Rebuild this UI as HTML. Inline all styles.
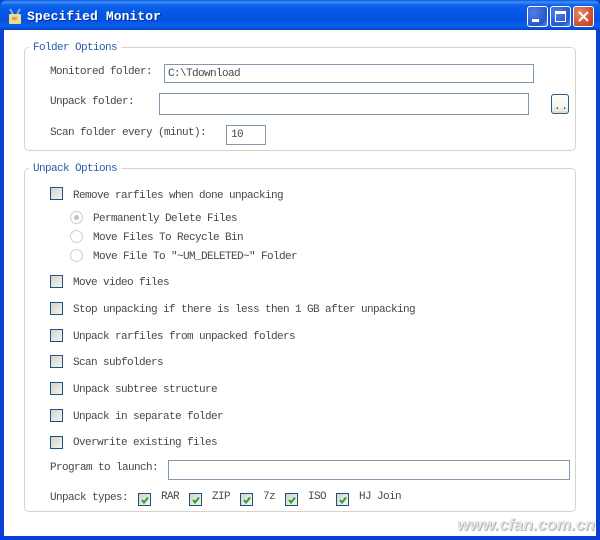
<!DOCTYPE html>
<html><head><meta charset="utf-8"><style>
html,body{margin:0;padding:0;background:#fff}
#w{position:relative;width:600px;height:540px;overflow:hidden;background:#0a3fd8}
#c{position:absolute;left:4px;top:30px;width:592px;height:506px;background:#fff}
.tb{position:absolute;left:0;top:0;width:600px;height:30px;border-radius:7px 7px 0 0;background:linear-gradient(180deg,#0a56d8 0,#3c8efb 2px,#0f62e8 5px,#0558e6 12px,#0552df 20px,#0a60ef 26px,#0445c4 30px)}
.t{position:absolute;font:11px/14px "Liberation Mono",monospace;letter-spacing:-.6px;color:#484848;white-space:pre}
.title{position:absolute;left:27px;top:9px;font:bold 13px/15px "Liberation Mono",monospace;letter-spacing:.08px;color:#fff;text-shadow:1px 1px 0 #0a2f90;white-space:pre}
.g{position:absolute;border:1px solid #d6d4c8;border-radius:5px;box-sizing:border-box}
.lg{position:absolute;background:#fff;padding:0 4px 0 4px;font:11px/14px "Liberation Mono",monospace;letter-spacing:-.6px;color:#2a5cb0}
.i{position:absolute;box-sizing:border-box;border:1px solid #8299ad;background:#fff}
.cb{position:absolute;box-sizing:border-box;width:13px;height:13px;border:1px solid #1c5180;background:linear-gradient(135deg,#d4d4ce,#f4f4f0)}
.r{position:absolute;box-sizing:border-box;width:13px;height:13px;border-radius:50%;border:1px solid #cfcfc8;background:#fff}
.btn{position:absolute;box-sizing:border-box;border:1px solid #fff;border-radius:3px}
svg{position:absolute;overflow:visible}
</style></head><body><div id="w">
<div class="tb"></div>
<div id="c"></div>
<svg style="left:8px;top:8px" width="14" height="16" viewBox="0 0 14 16"><path d="M2 1L5 6M12 1L9 6" stroke="#7fb0e8" stroke-width="2" fill="none"/><rect x="1" y="6" width="12" height="10" rx="1" fill="#f0dc8c"/><rect x="4" y="9" width="5" height="3" fill="#e0a060"/></svg>
<div class="title">Specified Monitor</div>
<div class="btn" style="left:527px;top:6px;width:21px;height:21px;background:radial-gradient(circle at 30% 30%,#4f7fe8,#2a55cc 70%,#6d8fe0)"><div style="position:absolute;left:4px;top:12px;width:7px;height:3px;background:#fff"></div></div>
<div class="btn" style="left:550px;top:6px;width:21px;height:21px;background:radial-gradient(circle at 30% 30%,#4f7fe8,#2a55cc 70%,#6d8fe0)"><div style="position:absolute;left:4px;top:4px;width:11px;height:11px;box-sizing:border-box;border:1px solid #fff;border-top-width:3px"></div></div>
<div class="btn" style="left:573px;top:6px;width:21px;height:21px;background:radial-gradient(circle at 30% 30%,#e88a6a,#d0492a 70%,#c03a1c)"><svg style="left:4px;top:4px" width="11" height="11" viewBox="0 0 11 11"><path d="M1 1L10 10M10 1L1 10" stroke="#fff" stroke-width="2"/></svg></div>

<div class="g" style="left:24px;top:47px;width:552px;height:104px"></div>
<div class="lg" style="left:29px;top:41px">Folder Options</div>
<div class="t" style="left:50px;top:65px">Monitored folder:</div>
<div class="i" style="left:164px;top:64px;width:370px;height:19px"></div>
<div class="t" style="left:168px;top:67px">C:\Tdownload</div>
<div class="t" style="left:50px;top:95px">Unpack folder:</div>
<div class="i" style="left:159px;top:93px;width:370px;height:22px"></div>
<div style="position:absolute;left:551px;top:94px;width:18px;height:20px;box-sizing:border-box;border:1px solid #2c5a80;border-radius:3px;background:linear-gradient(180deg,#fff,#f0f0ea 80%,#dcdcd4)"></div>
<div class="t" style="left:554px;top:100px;letter-spacing:.6px">..</div>
<div class="t" style="left:50px;top:126px">Scan folder every (minut):</div>
<div class="i" style="left:226px;top:125px;width:40px;height:20px"></div>
<div class="t" style="left:231px;top:128px">10</div>

<div class="g" style="left:24px;top:168px;width:552px;height:344px"></div>
<div class="lg" style="left:29px;top:162px">Unpack Options</div>

<div class="cb" style="left:50px;top:187px"></div><div class="t" style="left:73px;top:189px">Remove rarfiles when done unpacking</div>
<div class="r" style="left:70px;top:211px"><div style="position:absolute;left:3px;top:3px;width:5px;height:5px;border-radius:50%;background:#c4c4bc"></div></div><div class="t" style="left:93px;top:212px">Permanently Delete Files</div>
<div class="r" style="left:70px;top:230px"></div><div class="t" style="left:93px;top:231px">Move Files To Recycle Bin</div>
<div class="r" style="left:70px;top:249px"></div><div class="t" style="left:93px;top:250px">Move File To "~UM_DELETED~" Folder</div>
<div class="cb" style="left:50px;top:275px"></div><div class="t" style="left:73px;top:276px">Move video files</div>
<div class="cb" style="left:50px;top:302px"></div><div class="t" style="left:73px;top:303px">Stop unpacking if there is less then 1 GB after unpacking</div>
<div class="cb" style="left:50px;top:329px"></div><div class="t" style="left:73px;top:330px">Unpack rarfiles from unpacked folders</div>
<div class="cb" style="left:50px;top:355px"></div><div class="t" style="left:73px;top:356px">Scan subfolders</div>
<div class="cb" style="left:50px;top:382px"></div><div class="t" style="left:73px;top:383px">Unpack subtree structure</div>
<div class="cb" style="left:50px;top:409px"></div><div class="t" style="left:73px;top:410px">Unpack in separate folder</div>
<div class="cb" style="left:50px;top:436px"></div><div class="t" style="left:73px;top:436px">Overwrite existing files</div>
<div class="t" style="left:50px;top:461px">Program to launch:</div>
<div class="i" style="left:168px;top:460px;width:402px;height:20px"></div>
<div class="t" style="left:50px;top:491px">Unpack types:</div>

<div class="cb" style="left:138px;top:493px"><svg style="left:1px;top:1px" width="10" height="10" viewBox="0 0 10 10"><path d="M2 5L4 7.5L8 2.5" stroke="#30a030" stroke-width="2" fill="none"/></svg></div><div class="t" style="left:161px;top:490px">RAR</div>
<div class="cb" style="left:189px;top:493px"><svg style="left:1px;top:1px" width="10" height="10" viewBox="0 0 10 10"><path d="M2 5L4 7.5L8 2.5" stroke="#30a030" stroke-width="2" fill="none"/></svg></div><div class="t" style="left:212px;top:490px">ZIP</div>
<div class="cb" style="left:240px;top:493px"><svg style="left:1px;top:1px" width="10" height="10" viewBox="0 0 10 10"><path d="M2 5L4 7.5L8 2.5" stroke="#30a030" stroke-width="2" fill="none"/></svg></div><div class="t" style="left:263px;top:490px">7z</div>
<div class="cb" style="left:285px;top:493px"><svg style="left:1px;top:1px" width="10" height="10" viewBox="0 0 10 10"><path d="M2 5L4 7.5L8 2.5" stroke="#30a030" stroke-width="2" fill="none"/></svg></div><div class="t" style="left:308px;top:490px">ISO</div>
<div class="cb" style="left:336px;top:493px"><svg style="left:1px;top:1px" width="10" height="10" viewBox="0 0 10 10"><path d="M2 5L4 7.5L8 2.5" stroke="#30a030" stroke-width="2" fill="none"/></svg></div><div class="t" style="left:359px;top:490px">HJ Join</div>

<div style="position:absolute;left:457px;top:515px;font:italic bold 16.4px/20px 'Liberation Sans',sans-serif;color:#e6e6e6;text-shadow:1px 1px 0 #b4b4b4;white-space:pre">www.cfan.com.cn</div>
</div></body></html>
